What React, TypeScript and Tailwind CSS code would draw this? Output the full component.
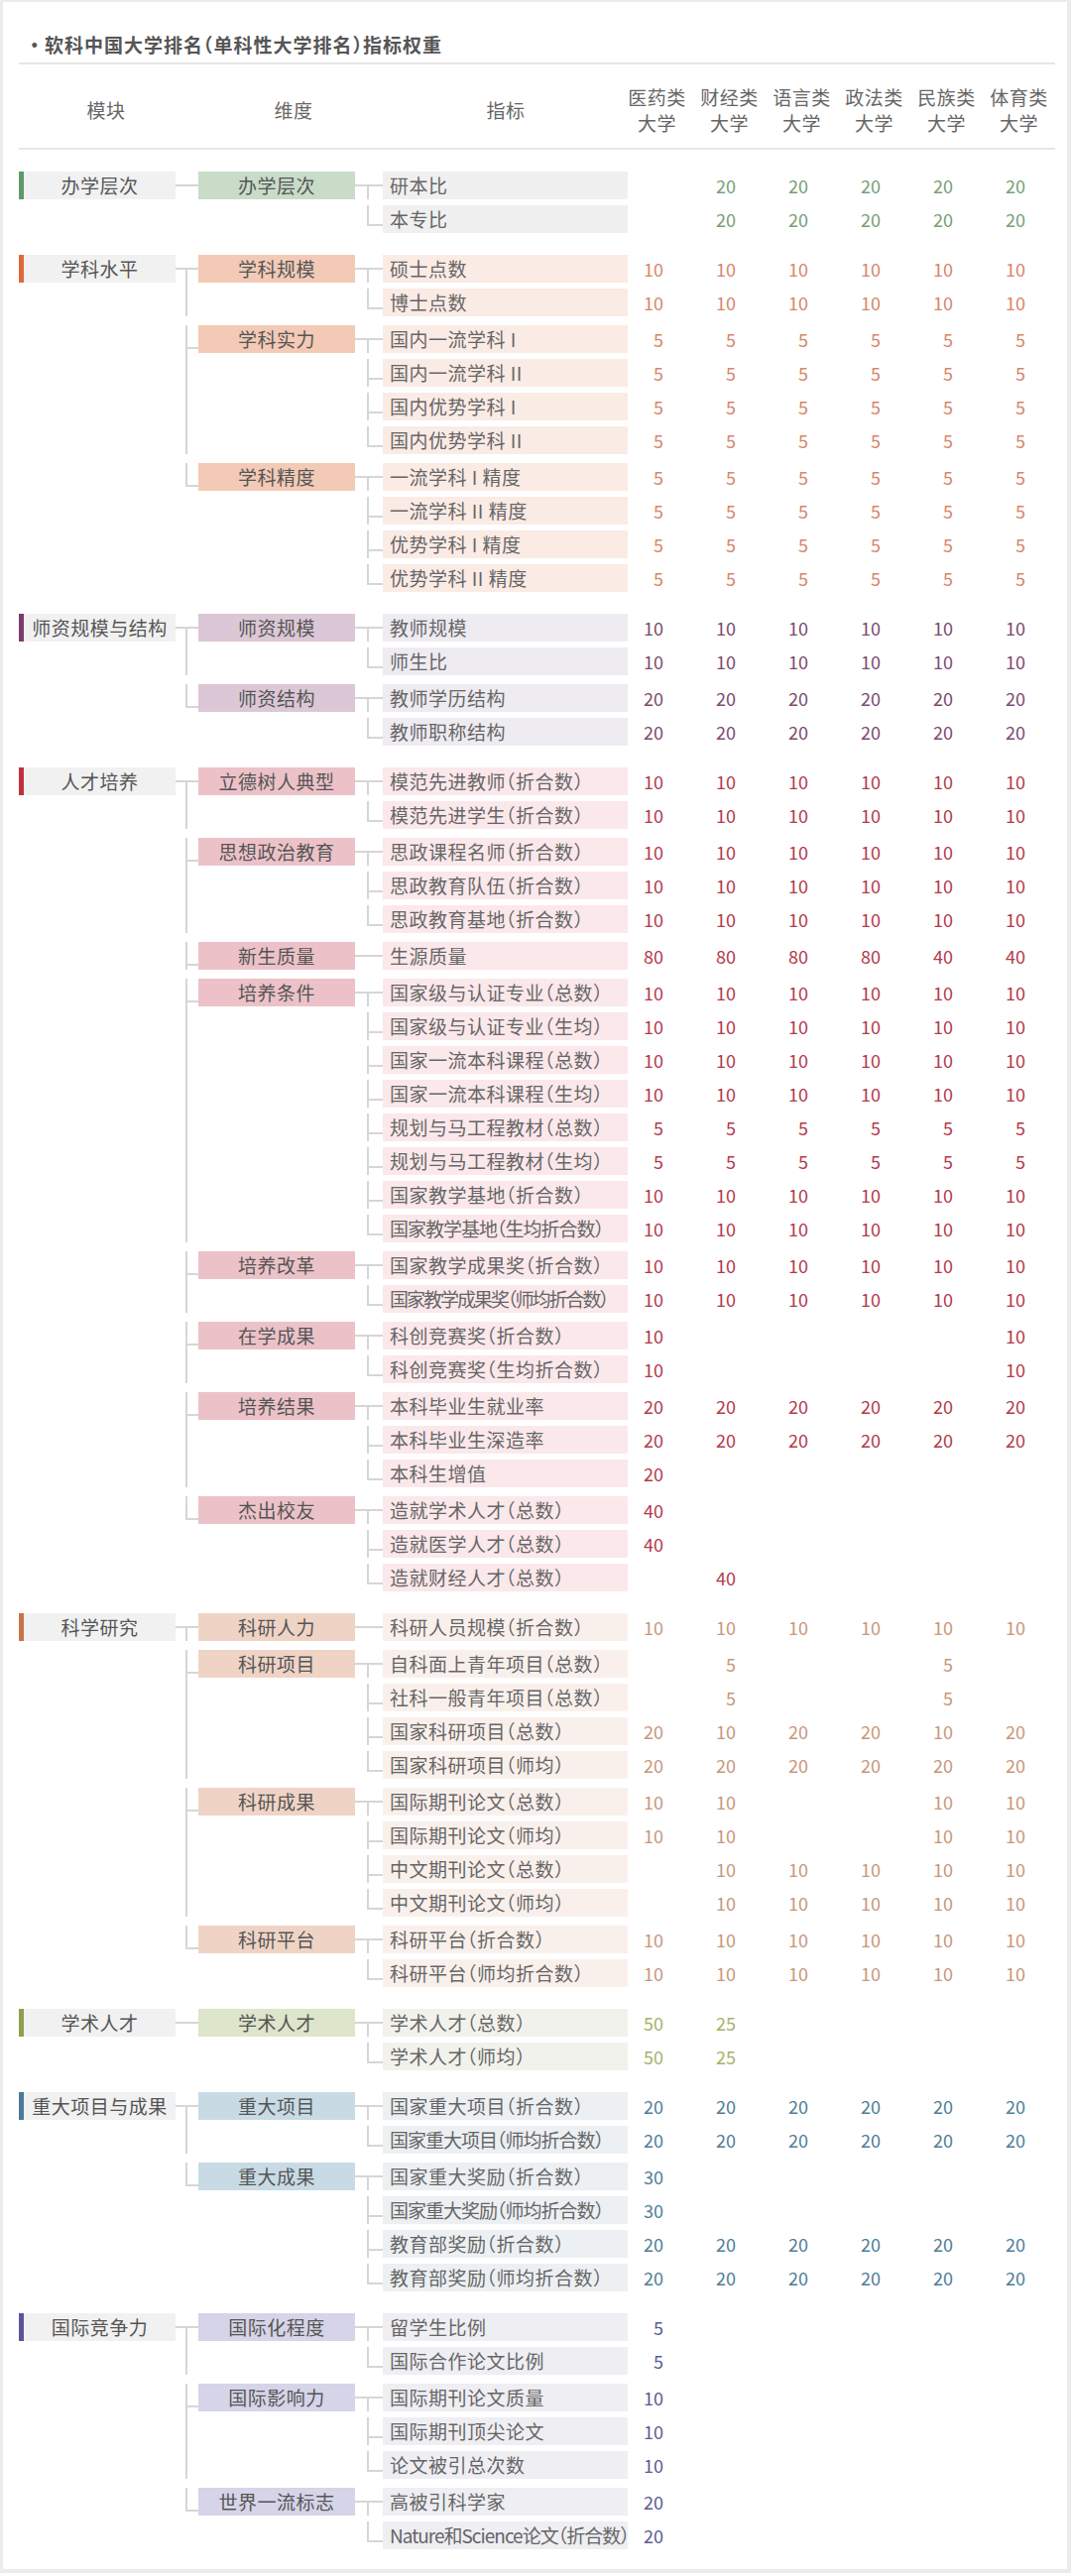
import React from 'react';

type Row = { t: string; v: string[]; tr?: string };
type Dim = { name: string; rows: Row[] };
type Theme = { bar: string; dim: string; ind: string; val: string };
type Section = { name: string; th: Theme; dims: Dim[] };

const r = (t: string, v: string[], tr?: string): Row => ({ t, v, tr });
const six = (n: string) => [n, n, n, n, n, n];

const green: Theme = { bar: 'border-l-[#5f9a6a]', dim: 'bg-[#c8dcc8]', ind: 'bg-[#f0f0f0]', val: 'text-[#78a075]' };
const orange: Theme = { bar: 'border-l-[#e0693a]', dim: 'bg-[#f3cab6]', ind: 'bg-[#fbebe5]', val: 'text-[#d8866a]' };
const plum: Theme = { bar: 'border-l-[#7c3b6c]', dim: 'bg-[#dcc7d6]', ind: 'bg-[#eeebf1]', val: 'text-[#7d4a70]' };
const red: Theme = { bar: 'border-l-[#c2303d]', dim: 'bg-[#ecc2c8]', ind: 'bg-[#fbe8eb]', val: 'text-[#b43a4b]' };
const tan: Theme = { bar: 'border-l-[#c7744c]', dim: 'bg-[#efd4c6]', ind: 'bg-[#f9f0ec]', val: 'text-[#c8977b]' };
const olive: Theme = { bar: 'border-l-[#8da24c]', dim: 'bg-[#dde5ca]', ind: 'bg-[#f2f2ec]', val: 'text-[#a5b36c]' };
const blue: Theme = { bar: 'border-l-[#4c7b9a]', dim: 'bg-[#c8dbe5]', ind: 'bg-[#ecf0f3]', val: 'text-[#4f7e98]' };
const violet: Theme = { bar: 'border-l-[#5b5596]', dim: 'bg-[#d6d4e8]', ind: 'bg-[#eeeef3]', val: 'text-[#5e5a94]' };

const DATA: Section[] = [
  {
    name: '办学层次',
    th: green,
    dims: [
      {
        name: '办学层次',
        rows: [r('研本比', ['', '20', '20', '20', '20', '20']), r('本专比', ['', '20', '20', '20', '20', '20'])],
      },
    ],
  },
  {
    name: '学科水平',
    th: orange,
    dims: [
      { name: '学科规模', rows: [r('硕士点数', six('10')), r('博士点数', six('10'))] },
      {
        name: '学科实力',
        rows: [
          r('国内一流学科 I', six('5')),
          r('国内一流学科 II', six('5')),
          r('国内优势学科 I', six('5')),
          r('国内优势学科 II', six('5')),
        ],
      },
      {
        name: '学科精度',
        rows: [
          r('一流学科 I 精度', six('5')),
          r('一流学科 II 精度', six('5')),
          r('优势学科 I 精度', six('5')),
          r('优势学科 II 精度', six('5')),
        ],
      },
    ],
  },
  {
    name: '师资规模与结构',
    th: plum,
    dims: [
      { name: '师资规模', rows: [r('教师规模', six('10')), r('师生比', six('10'))] },
      { name: '师资结构', rows: [r('教师学历结构', six('20')), r('教师职称结构', six('20'))] },
    ],
  },
  {
    name: '人才培养',
    th: red,
    dims: [
      { name: '立德树人典型', rows: [r('模范先进教师（折合数）', six('10')), r('模范先进学生（折合数）', six('10'))] },
      {
        name: '思想政治教育',
        rows: [
          r('思政课程名师（折合数）', six('10')),
          r('思政教育队伍（折合数）', six('10')),
          r('思政教育基地（折合数）', six('10')),
        ],
      },
      { name: '新生质量', rows: [r('生源质量', ['80', '80', '80', '80', '40', '40'])] },
      {
        name: '培养条件',
        rows: [
          r('国家级与认证专业（总数）', six('10')),
          r('国家级与认证专业（生均）', six('10')),
          r('国家一流本科课程（总数）', six('10')),
          r('国家一流本科课程（生均）', six('10')),
          r('规划与马工程教材（总数）', six('5')),
          r('规划与马工程教材（生均）', six('5')),
          r('国家教学基地（折合数）', six('10')),
          r('国家教学基地（生均折合数）', six('10'), 'tracking-[-1px]'),
        ],
      },
      {
        name: '培养改革',
        rows: [
          r('国家教学成果奖（折合数）', six('10')),
          r('国家教学成果奖（师均折合数）', six('10'), 'tracking-[-2px]'),
        ],
      },
      {
        name: '在学成果',
        rows: [
          r('科创竞赛奖（折合数）', ['10', '', '', '', '', '10']),
          r('科创竞赛奖（生均折合数）', ['10', '', '', '', '', '10']),
        ],
      },
      {
        name: '培养结果',
        rows: [
          r('本科毕业生就业率', six('20')),
          r('本科毕业生深造率', six('20')),
          r('本科生增值', ['20', '', '', '', '', '']),
        ],
      },
      {
        name: '杰出校友',
        rows: [
          r('造就学术人才（总数）', ['40', '', '', '', '', '']),
          r('造就医学人才（总数）', ['40', '', '', '', '', '']),
          r('造就财经人才（总数）', ['', '40', '', '', '', '']),
        ],
      },
    ],
  },
  {
    name: '科学研究',
    th: tan,
    dims: [
      { name: '科研人力', rows: [r('科研人员规模（折合数）', six('10'))] },
      {
        name: '科研项目',
        rows: [
          r('自科面上青年项目（总数）', ['', '5', '', '', '5', '']),
          r('社科一般青年项目（总数）', ['', '5', '', '', '5', '']),
          r('国家科研项目（总数）', ['20', '10', '20', '20', '10', '20']),
          r('国家科研项目（师均）', six('20')),
        ],
      },
      {
        name: '科研成果',
        rows: [
          r('国际期刊论文（总数）', ['10', '10', '', '', '10', '10']),
          r('国际期刊论文（师均）', ['10', '10', '', '', '10', '10']),
          r('中文期刊论文（总数）', ['', '10', '10', '10', '10', '10']),
          r('中文期刊论文（师均）', ['', '10', '10', '10', '10', '10']),
        ],
      },
      { name: '科研平台', rows: [r('科研平台（折合数）', six('10')), r('科研平台（师均折合数）', six('10'))] },
    ],
  },
  {
    name: '学术人才',
    th: olive,
    dims: [
      {
        name: '学术人才',
        rows: [r('学术人才（总数）', ['50', '25', '', '', '', '']), r('学术人才（师均）', ['50', '25', '', '', '', ''])],
      },
    ],
  },
  {
    name: '重大项目与成果',
    th: blue,
    dims: [
      {
        name: '重大项目',
        rows: [
          r('国家重大项目（折合数）', six('20')),
          r('国家重大项目（师均折合数）', six('20'), 'tracking-[-1px]'),
        ],
      },
      {
        name: '重大成果',
        rows: [
          r('国家重大奖励（折合数）', ['30', '', '', '', '', '']),
          r('国家重大奖励（师均折合数）', ['30', '', '', '', '', ''], 'tracking-[-1px]'),
          r('教育部奖励（折合数）', six('20')),
          r('教育部奖励（师均折合数）', six('20')),
        ],
      },
    ],
  },
  {
    name: '国际竞争力',
    th: violet,
    dims: [
      { name: '国际化程度', rows: [r('留学生比例', ['5', '', '', '', '', '']), r('国际合作论文比例', ['5', '', '', '', '', ''])] },
      {
        name: '国际影响力',
        rows: [
          r('国际期刊论文质量', ['10', '', '', '', '', '']),
          r('国际期刊顶尖论文', ['10', '', '', '', '', '']),
          r('论文被引总次数', ['10', '', '', '', '', '']),
        ],
      },
      {
        name: '世界一流标志',
        rows: [
          r('高被引科学家', ['20', '', '', '', '', '']),
          r('Nature和Science论文（折合数）', ['20', '', '', '', '', ''], 'tracking-[-1px]'),
        ],
      },
    ],
  },
];

const COLS = ['医药类', '财经类', '语言类', '政法类', '民族类', '体育类'];

// tree connector: horizontal stub at the box centre, vertical line joining siblings
function Link({ first, last, w, ml, top }: { first: boolean; last: boolean; w: string; ml: string; top: string }) {
  return (
    <div className={`${w} shrink-0 flex flex-col`}>
      <div className={`${first ? 'h-[13px]' : `${top} ${ml} border-l-2 border-[#d6d6d6]`}`} />
      <div className={`h-[2px] bg-[#d6d6d6] ${first ? '' : ml}`} />
      <div className={`flex-1 ${last ? '' : `${ml} border-l-2 border-[#d6d6d6]`}`} />
    </div>
  );
}

function SectionView({ s }: { s: Section }) {
  return (
    <div className="flex items-start">
      <div
        className={`w-[158px] h-[28px] shrink-0 border-l-[5px] ${s.th.bar} bg-[#f1f1f1] text-center leading-[28px] text-[19px] tracking-[0.5px] text-[#555]`}
      >
        {s.name}
      </div>
      <div className="flex flex-col">
        {s.dims.map((d, gi) => (
          <div key={d.name + gi} className={`flex ${gi > 0 ? 'pt-[9px]' : ''}`}>
            <Link first={gi === 0} last={gi === s.dims.length - 1} w="w-[23px]" ml="ml-[10px]" top="h-[22px]" />
            <div
              className={`w-[158px] h-[28px] shrink-0 ${s.th.dim} text-center leading-[28px] text-[19px] tracking-[0.5px] text-[#555]`}
            >
              {d.name}
            </div>
            <div className="flex flex-col">
              {d.rows.map((row, ri) => (
                <div key={row.t} className={`flex ${ri > 0 ? 'pt-[6px]' : ''}`}>
                  <Link first={ri === 0} last={ri === d.rows.length - 1} w="w-[28px]" ml="ml-[12px]" top="h-[19px]" />
                  <div
                    className={`w-[247px] h-[28px] shrink-0 ${s.th.ind} pl-[7px] leading-[28px] text-[19px] whitespace-nowrap overflow-hidden text-[#666] ${row.tr ?? 'tracking-[0.5px]'}`}
                  >
                    {row.t}
                  </div>
                  <div className="flex">
                    {row.v.map((v, vi) => (
                      <div key={vi} className={`w-[73px] h-[28px] pr-[37px] text-right leading-[28px] text-[18px] ${s.th.val}`}>
                        {v}
                      </div>
                    ))}
                  </div>
                </div>
              ))}
            </div>
          </div>
        ))}
      </div>
    </div>
  );
}

export default function App() {
  return (
    <div className="w-[1080px] bg-[#ececec] pl-[3px] pt-[2px] pr-[4px] pb-[4px] font-['Noto_Sans_CJK_SC','Noto_Sans',sans-serif] [font-feature-settings:'halt']">
      <div className="bg-white pb-[20px]">
        <div className="h-[61px] pt-[29px] pl-[27px] flex text-[19px] leading-[28px] font-bold tracking-[1px] text-[#555]">
          <span className="w-[15px]">·</span>
          <span>软科中国大学排名（单科性大学排名）指标权重</span>
        </div>
        <div className="ml-[16px] mr-[12px] h-[2px] bg-[#e6e6e6]" />

        <div className="h-[84px] pt-[8px] pl-[16px] flex items-center text-[19px] tracking-[0.5px] text-[#666]">
          <div className="w-[176px] text-center">模块</div>
          <div className="w-[202px] text-center">维度</div>
          <div className="w-[226px] text-center">指标</div>
          <div className="w-[10px]" />
          {COLS.map((c) => (
            <div key={c} className="w-[73px] pr-[14px] text-center leading-[26px] whitespace-nowrap">
              <div>{c}</div>
              <div>大学</div>
            </div>
          ))}
        </div>
        <div className="ml-[16px] mr-[12px] h-[2px] bg-[#e6e6e6]" />

        <div className="pt-[22px] pl-[16px] flex flex-col gap-[22px]">
          {DATA.map((s) => (
            <SectionView key={s.name} s={s} />
          ))}
        </div>
      </div>
    </div>
  );
}
